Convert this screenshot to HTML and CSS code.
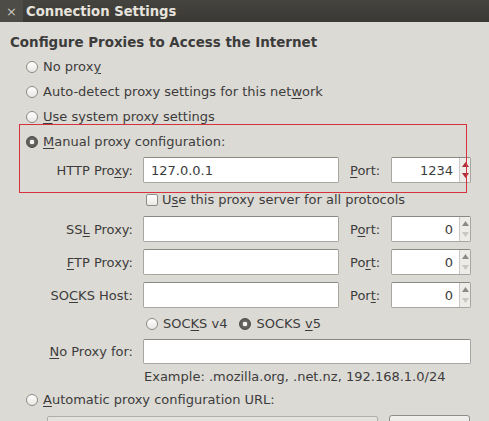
FILE: index.html
```html
<!DOCTYPE html>
<html>
<head>
<meta charset="utf-8">
<link rel="stylesheet" href="styles.css">
</head>
<body>
<div class="window">
  <div class="titlebar">
    <span class="close">×</span>
    <span class="title">Connection Settings</span>
  </div>
  <div class="heading">Configure Proxies to Access the Internet</div>
  <div class="options">
    <div class="radio-row"><span class="radio"></span><span>No prox<u>y</u></span></div>
    <div class="radio-row"><span class="radio"></span><span>Auto-detect proxy settings for this net<u>w</u>ork</span></div>
    <div class="radio-row"><span class="radio"></span><span><u>U</u>se system proxy settings</span></div>
    <div class="radio-row"><span class="radio checked"></span><span><u>M</u>anual proxy configuration:</span></div>
  </div>
  <div class="proxy-grid">
    <span class="label">HTTP Pro<u>x</u>y:</span>
    <div class="field">127.0.0.1</div>
    <span class="port-label"><u>P</u>ort:</span>
    <div class="spin">
      <span class="val">1234</span>
      <span class="arrows hot">
        <svg width="7" height="5" viewBox="0 0 7 5"><path d="M3.5 0L7 5H0Z"/></svg>
        <svg width="7" height="5" viewBox="0 0 7 5"><path d="M0 0H7L3.5 5Z"/></svg>
      </span>
    </div>

    <div class="check-row"><span class="checkbox"></span><span>U<u>s</u>e this proxy server for all protocols</span></div>

    <span class="label">SS<u>L</u> Proxy:</span>
    <div class="field"></div>
    <span class="port-label">P<u>o</u>rt:</span>
    <div class="spin">
      <span class="val">0</span>
      <span class="arrows">
        <svg width="7" height="5" viewBox="0 0 7 5"><path d="M3.5 0L7 5H0Z"/></svg>
        <svg class="dim" width="7" height="5" viewBox="0 0 7 5"><path d="M0 0H7L3.5 5Z"/></svg>
      </span>
    </div>

    <span class="label"><u>F</u>TP Proxy:</span>
    <div class="field"></div>
    <span class="port-label">Po<u>r</u>t:</span>
    <div class="spin">
      <span class="val">0</span>
      <span class="arrows">
        <svg width="7" height="5" viewBox="0 0 7 5"><path d="M3.5 0L7 5H0Z"/></svg>
        <svg class="dim" width="7" height="5" viewBox="0 0 7 5"><path d="M0 0H7L3.5 5Z"/></svg>
      </span>
    </div>

    <span class="label">SO<u>C</u>KS Host:</span>
    <div class="field"></div>
    <span class="port-label">Por<u>t</u>:</span>
    <div class="spin">
      <span class="val">0</span>
      <span class="arrows">
        <svg width="7" height="5" viewBox="0 0 7 5"><path d="M3.5 0L7 5H0Z"/></svg>
        <svg class="dim" width="7" height="5" viewBox="0 0 7 5"><path d="M0 0H7L3.5 5Z"/></svg>
      </span>
    </div>

    <div class="socks-row">
      <span class="radio"></span><span>SOC<u>K</u>S v4</span>
      <span class="radio checked v5"></span><span>SOCKS <u>v</u>5</span>
    </div>

    <span class="label"><u>N</u>o Proxy for:</span>
    <div class="field wide"></div>

    <div class="example">Example: .mozilla.org, .net.nz, 192.168.1.0/24</div>
  </div>
  <div class="radio-row auto"><span class="radio"></span><span><u>A</u>utomatic proxy configuration URL:</span></div>
  <div class="url-row">
    <div class="field url"></div>
    <div class="button"></div>
  </div>
  <div class="highlight"></div>
</div>
</body>
</html>
```

FILE: styles.css
```css
html, body {
  margin: 0;
  padding: 0;
}

body {
  background: #dcdad5;
  font-family: "DejaVu Sans", sans-serif;
  font-size: 13px;
  color: #3c3c3c;
  width: 489px;
  height: 421px;
  overflow: hidden;
}

.window {
  position: relative;
  width: 489px;
  height: 421px;
}

u {
  text-decoration: underline;
  text-underline-offset: 2px;
}

.titlebar {
  height: 22px;
  background: linear-gradient(#45443f, #3a3935);
  display: flex;
  align-items: center;
  color: #e6e3dc;
}

.close {
  width: 23px;
  height: 22px;
  display: flex;
  align-items: center;
  justify-content: center;
  background: #4d4c47;
  color: #c9c6bf;
  font-size: 13px;
}

.title {
  font-weight: bold;
  font-size: 13.2px;
  margin-left: 3px;
}

.heading {
  margin: 12px 0 0 10px;
  font-weight: bold;
  font-size: 13.45px;
  line-height: 18px;
}

.options {
  margin-top: 2px;
  display: flex;
  flex-direction: column;
}

.radio-row {
  height: 25px;
  display: flex;
  align-items: center;
  padding-left: 26px;
  gap: 5px;
}

.radio {
  width: 12px;
  height: 12px;
  box-sizing: border-box;
  border-radius: 50%;
  border: 1px solid #8e8b85;
  background: linear-gradient(#ffffff, #e9e7e3);
  flex: none;
}

.radio.checked {
  border-color: #4a4946;
  background: radial-gradient(circle, #f4f3f1 0 2px, #6a6864 2.6px, #55534f 100%);
}

.proxy-grid {
  display: grid;
  grid-template-columns: 143px 207px 41px 80px;
  grid-template-rows: 26px 19px 26px 26px 26px 17px 25px auto;
  row-gap: 7px;
  margin-top: 3px;
  align-items: center;
}

.label {
  text-align: right;
  padding-right: 10px;
}

.field {
  height: 26px;
  width: 196px;
  box-sizing: border-box;
  background: #ffffff;
  border: 1px solid #a8a6a0;
  border-top-color: #8a8883;
  border-radius: 2px;
  padding-left: 7px;
  display: flex;
  align-items: center;
}

.field.wide {
  grid-column: 2 / span 3;
  width: 328px;
  height: 25px;
}

.spin {
  height: 26px;
  box-sizing: border-box;
  display: flex;
  border: 1px solid #a8a6a0;
  border-top-color: #8a8883;
  border-radius: 2px;
  background: #ffffff;
}

.spin .val {
  flex: 1;
  padding-right: 6px;
  display: flex;
  align-items: center;
  justify-content: flex-end;
}

.spin .arrows {
  width: 11px;
  border-left: 1px solid #c9c7c1;
  background: #edece9;
  display: flex;
  flex-direction: column;
  align-items: center;
  justify-content: space-between;
  padding: 4px 0;
  box-sizing: border-box;
  fill: #8d8b86;
}

.spin .arrows .dim {
  fill: #c8c6c1;
}

.spin .arrows.hot {
  fill: #a8313b;
}

.check-row {
  grid-column: 2 / span 3;
  display: flex;
  align-items: center;
  padding-left: 3px;
  gap: 4px;
}

.checkbox {
  width: 12px;
  height: 12px;
  box-sizing: border-box;
  border: 1px solid #8e8b85;
  border-radius: 2px;
  background: linear-gradient(#ffffff, #ebe9e5);
}

.socks-row {
  grid-column: 2 / span 3;
  display: flex;
  align-items: center;
  padding-left: 3px;
  gap: 5px;
}

.socks-row .v5 {
  margin-left: 7px;
}

.example {
  grid-column: 2 / span 3;
  line-height: 15px;
  margin-top: -2px;
  padding-left: 1px;
}

.radio-row.auto {
  margin-top: 3px;
}

.url-row {
  display: flex;
  gap: 11px;
  padding-left: 47px;
  margin-top: 4px;
}

.field.url {
  width: 331px;
  background: #e4e2dd;
  border-color: #b0aea8;
}

.button {
  width: 81px;
  height: 26px;
  margin-top: -1px;
  box-sizing: border-box;
  border: 1px solid #8f8d87;
  border-radius: 3px;
  background: linear-gradient(#f1f0ee, #dedcd7);
}

.highlight {
  position: absolute;
  left: 19px;
  top: 124px;
  width: 448px;
  height: 69px;
  box-sizing: border-box;
  border: 1px solid #d5323d;
  pointer-events: none;
}
```
